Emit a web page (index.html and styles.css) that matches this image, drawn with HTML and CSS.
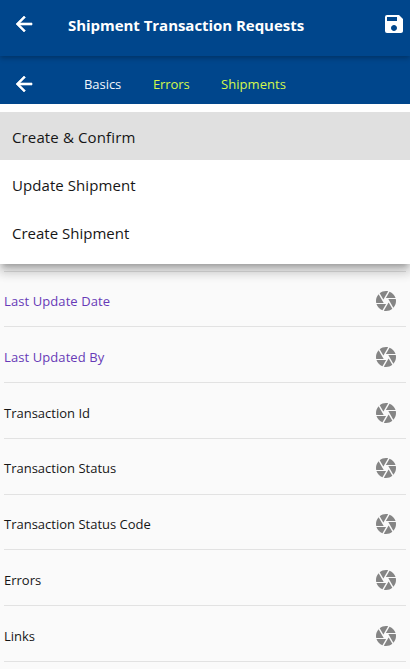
FILE: index.html
```
<!DOCTYPE html>
<html lang="en">
<head>
<meta charset="utf-8">
<title>Shipment Transaction Requests</title>
<link rel="stylesheet" href="styles.css">
</head>
<body>
<svg class="sprite" aria-hidden="true">
  <symbol id="back" viewBox="0 0 24 24"><path d="M20 11H7.83l5.59-5.59L12 4l-8 8 8 8 1.41-1.41L7.83 13H20v-2z" stroke="currentColor" stroke-width=".6"/></symbol>
  <symbol id="save" viewBox="0 0 24 24"><path d="M17 3H5a2 2 0 0 0-2 2v14a2 2 0 0 0 2 2h14c1.1 0 2-.9 2-2V7l-4-4zm-5 16c-1.66 0-3-1.34-3-3s1.34-3 3-3 3 1.34 3 3-1.34 3-3 3zm3-10H5V5h10v4z"/></symbol>
  <symbol id="camera" viewBox="0 0 24 24"><path d="M9.4 10.5l4.77-8.26C13.47 2.09 12.75 2 12 2c-2.4 0-4.6.85-6.32 2.25l3.66 6.35.06-.1zM21.54 9c-.92-2.92-3.15-5.26-6-6.34L11.88 9h9.66zm.26 1h-7.49l.29.5 4.76 8.25C21 16.97 22 14.61 22 12c0-.69-.07-1.35-.2-2zM8.54 12l-3.9-6.75C3.01 7.03 2 9.39 2 12c0 .69.07 1.35.2 2h7.49l-1.15-2zm-6.08 3c.92 2.92 3.15 5.26 6 6.34L12.12 15H2.46zm11.27 0l-3.9 6.76c.7.15 1.42.24 2.17.24 2.4 0 4.6-.85 6.32-2.25l-3.66-6.35-.93 1.6z"/></symbol>
</svg>
<header class="appbar">
  <svg class="icon"><use href="#back"/></svg>
  <h1 class="title">Shipment Transaction Requests</h1>
  <svg class="icon"><use href="#save"/></svg>
</header>
<nav class="tabs">
  <svg class="icon"><use href="#back"/></svg>
  <span class="tab tab-active">Basics</span>
  <span class="tab tab-errors">Errors</span>
  <span class="tab">Shipments</span>
</nav>
<main class="content">
  <ul class="menu">
    <li class="option selected">Create &amp; Confirm</li>
    <li class="option update">Update Shipment</li>
    <li class="option">Create Shipment</li>
  </ul>
  <div class="fields">
    <div class="row link"><span>Last Update Date</span><svg class="icon"><use href="#camera"/></svg></div>
    <div class="row link"><span>Last Updated By</span><svg class="icon"><use href="#camera"/></svg></div>
    <div class="row"><span>Transaction Id</span><svg class="icon"><use href="#camera"/></svg></div>
    <div class="row"><span>Transaction Status</span><svg class="icon"><use href="#camera"/></svg></div>
    <div class="row"><span>Transaction Status Code</span><svg class="icon"><use href="#camera"/></svg></div>
    <div class="row"><span>Errors</span><svg class="icon"><use href="#camera"/></svg></div>
    <div class="row"><span>Links</span><svg class="icon"><use href="#camera"/></svg></div>
  </div>
</main>
</body>
</html>
```
FILE: styles.css
```
* { box-sizing: border-box; }
body { margin: 0; height: 669px; overflow: hidden; background: #fafafa; color: #161616; font-family: "Open Sans", "Noto Sans", sans-serif; }
.sprite { display: none; }
.icon { width: 24px; height: 24px; flex: none; fill: currentColor; }
.appbar { position: relative; z-index: 1; display: flex; align-items: center; height: 56px; padding: 0 4px 8px 12px; background: #00468c; color: #fff; box-shadow: 0 2px 5px rgba(0,0,0,.28); }
.title { flex: 1; margin: 2px 0 0 32px; font-size: 15px; line-height: 22px; font-weight: 700; letter-spacing: -.04px; white-space: nowrap; }
.tabs { display: flex; align-items: center; height: 48px; padding: 8px 12px 0; background: #00468c; color: #d4f84c; font-size: 13px; }
.tabs .icon { color: #fff; margin-right: 48px; }
.tab { white-space: nowrap; letter-spacing: .06px; }
.tab-active { width: 69px; color: #f2f7fc; letter-spacing: -.05px; }
.tab-errors { width: 68px; letter-spacing: -.1px; }
.content { position: relative; }
.content::before { content: ""; display: table; }
.menu { position: absolute; top: 0; left: 0; right: 0; margin: 0; padding: 8px 0; list-style: none; background: #fff; box-shadow: 0 5px 5px -3px rgba(0,0,0,.2), 0 8px 10px 1px rgba(0,0,0,.14), 0 3px 14px 2px rgba(0,0,0,.12); clip-path: inset(0 0 -30px 0); }
.option { height: 48px; padding: 3px 12px 0; line-height: 45px; font-size: 15px; }
.selected { background: #e0e0e0; letter-spacing: .13px; }
.update { letter-spacing: .07px; }
.fields { margin: 166.6px 4px 0; border-top: 1px solid #dfdfdf; }
.row { display: flex; align-items: center; justify-content: space-between; height: 55.75px; padding: 4.5px 8px 0 0; border-bottom: 1px solid #e2e2e2; font-size: 13px; }
.row .icon { color: #858585; }
.link { color: #673ab7; letter-spacing: .09px; }
```
